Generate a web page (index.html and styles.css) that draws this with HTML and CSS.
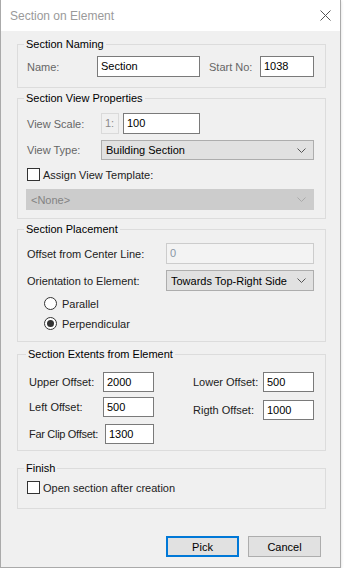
FILE: index.html
```html
<!DOCTYPE html>
<html lang="en">
<head>
    <meta charset="UTF-8">
    <meta name="viewport" content="width=device-width, initial-scale=1.0">
    <title>Section on Element</title>
    <link rel="stylesheet" href="styles.css">
</head>
<body>
    <div class="window">
        <div class="titlebar">
            <span class="title">Section on Element</span>
            <svg class="close" width="11" height="11" viewBox="0 0 11 11">
                <path d="M0.5 0.5 L10.5 10.5 M10.5 0.5 L0.5 10.5" stroke="#555" stroke-width="1" fill="none"/>
            </svg>
        </div>

        <fieldset class="group" id="naming">
            <legend>Section Naming</legend>
            <div class="row first">
                <label class="lbl dim w-name">Name:</label>
                <div class="field w-section">Section</div>
                <label class="lbl dim w-start">Start No:</label>
                <div class="field w-startno">1038</div>
            </div>
        </fieldset>

        <fieldset class="group" id="viewProps">
            <legend>Section View Properties</legend>
            <div class="row scale-row">
                <label class="lbl dim w-view">View Scale:</label>
                <div class="prefix">1:</div>
                <div class="field w-scale">100</div>
            </div>
            <div class="row type-row">
                <label class="lbl dim w-view">View Type:</label>
                <div class="combo w-type">
                    <span>Building Section</span>
                    <svg class="chev" width="9" height="5" viewBox="0 0 9 5"><polyline points="0.5,0.5 4.5,4.5 8.5,0.5" fill="none" stroke="#555"/></svg>
                </div>
            </div>
            <div class="row check-row">
                <span class="checkbox"></span>
                <span class="check-text">Assign View Template:</span>
            </div>
            <div class="row template-row">
                <div class="combo disabled w-template">
                    <span>&lt;None&gt;</span>
                    <svg class="chev" width="9" height="5" viewBox="0 0 9 5"><polyline points="0.5,0.5 4.5,4.5 8.5,0.5" fill="none" stroke="#aaa"/></svg>
                </div>
            </div>
        </fieldset>

        <fieldset class="group" id="placement">
            <legend>Section Placement</legend>
            <div class="row offset-row">
                <label class="lbl w-place">Offset from Center Line:</label>
                <div class="field readonly w-offset">0</div>
            </div>
            <div class="row orient-row">
                <label class="lbl w-place">Orientation to Element:</label>
                <div class="combo w-offset">
                    <span>Towards Top-Right Side</span>
                    <svg class="chev" width="9" height="5" viewBox="0 0 9 5"><polyline points="0.5,0.5 4.5,4.5 8.5,0.5" fill="none" stroke="#555"/></svg>
                </div>
            </div>
            <div class="row radio-row parallel">
                <span class="radio"></span>
                <span class="radio-text">Parallel</span>
            </div>
            <div class="row radio-row perp">
                <span class="radio checked"></span>
                <span class="radio-text">Perpendicular</span>
            </div>
        </fieldset>

        <fieldset class="group" id="extents">
            <legend>Section Extents from Element</legend>
            <div class="extents">
                <div class="col left-col">
                    <div class="row ext-first">
                        <label class="lbl w-ext">Upper Offset:</label>
                        <div class="field w-num">2000</div>
                    </div>
                    <div class="row ext-left">
                        <label class="lbl w-ext">Left Offset:</label>
                        <div class="field w-num">500</div>
                    </div>
                    <div class="row ext-far">
                        <label class="lbl w-far">Far Clip Offset:</label>
                        <div class="field w-farnum">1300</div>
                    </div>
                </div>
                <div class="col right-col">
                    <div class="row ext-first">
                        <label class="lbl w-ext-r">Lower Offset:</label>
                        <div class="field w-num">500</div>
                    </div>
                    <div class="row ext-right">
                        <label class="lbl w-ext-r">Rigth Offset:</label>
                        <div class="field w-num">1000</div>
                    </div>
                </div>
            </div>
        </fieldset>

        <fieldset class="group" id="finish">
            <legend>Finish</legend>
            <div class="row finish-row">
                <span class="checkbox"></span>
                <span class="check-text">Open section after creation</span>
            </div>
        </fieldset>

        <div class="buttons">
            <button class="btn default">Pick</button>
            <button class="btn">Cancel</button>
        </div>
    </div>
</body>
</html>
```

FILE: styles.css
```css
body {
    margin: 0;
    background: #ffffff;
    font-family: "Liberation Sans", Arial, sans-serif;
    font-size: 11px;
    color: #222;
}

.window {
    box-sizing: border-box;
    width: 341px;
    height: 568px;
    background: #f0f0f0;
    border: 1px solid #aaaaaa;
    border-top: none;
    box-shadow: 0 1px 3px rgba(0, 0, 0, 0.15);
}

.titlebar {
    height: 31px;
    background: #ffffff;
    display: flex;
    align-items: center;
    justify-content: space-between;
    padding: 0 9px 0 9px;
    box-sizing: border-box;
}

.title {
    font-size: 12px;
    color: #9a9a9a;
}

/* group boxes */
.group {
    margin: 0 0 0 16px;
    padding: 0 11px 0 9px;
    width: 309px;
    box-sizing: border-box;
    border: 1px solid #dcdcdc;
    min-width: 0;
}

.group legend {
    margin-left: -3px;
    padding: 0 2px;
    line-height: 14px;
    color: #000;
}

#naming { margin-top: 6px; padding-bottom: 10px; }
#viewProps { margin-top: 3px; padding-bottom: 8px; }
#placement { margin-top: 3px; padding-bottom: 11px; }
#extents { margin-top: 5px; padding-bottom: 6px; padding-left: 11px; }
#finish { margin-top: 10px; padding-bottom: 14px; }

.row {
    display: flex;
    align-items: center;
}

.lbl {
    flex: none;
    color: #222;
}

.lbl.dim {
    color: #666;
}

.field {
    box-sizing: border-box;
    height: 21px;
    line-height: 19px;
    border: 1px solid #7a7a7a;
    background: #ffffff;
    padding: 0 3px;
    color: #000;
    flex: none;
}

.field.readonly {
    border-color: #cccccc;
    background: #f3f3f3;
    color: #8a96a6;
}

.prefix {
    box-sizing: border-box;
    width: 18px;
    height: 21px;
    line-height: 19px;
    border: 1px solid #dadada;
    color: #8a8a8a;
    padding-left: 3px;
    margin-right: 4px;
}

.combo {
    box-sizing: border-box;
    height: 21px;
    border: 1px solid #adadad;
    background: #e1e1e1;
    display: flex;
    align-items: center;
    justify-content: space-between;
    padding: 0 7px 0 4px;
    color: #000;
    flex: none;
}

.combo.disabled {
    background: #cccccc;
    border-color: #cccccc;
    color: #838383;
}

.checkbox {
    box-sizing: border-box;
    width: 13px;
    height: 13px;
    border: 1px solid #333;
    background: #fff;
    flex: none;
}

.check-text {
    margin-left: 3px;
    color: #222;
}

.radio {
    box-sizing: border-box;
    width: 13px;
    height: 13px;
    border: 1px solid #333;
    border-radius: 50%;
    background: #fff;
    flex: none;
    display: flex;
    align-items: center;
    justify-content: center;
}

.radio.checked::after {
    content: "";
    width: 7px;
    height: 7px;
    border-radius: 50%;
    background: #333;
}

.radio-text {
    margin-left: 5px;
}

/* widths */
.w-name { width: 70px; }
.w-section { width: 103px; }
.w-start { width: 51px; margin-left: 9px; }
.w-startno { width: 54px; }
.w-view { width: 74px; }
.w-scale { width: 77px; }
.w-type { width: 213px; height: 20px; }
.w-template { width: 288px; margin-left: -1px; }
.w-place { width: 139px; }
.w-offset { width: 148px; }
.w-ext { width: 74px; }
.w-far { width: 76px; letter-spacing: -0.3px; }
.w-num { width: 51px; height: 20px; line-height: 18px; }
.w-farnum { width: 49px; height: 20px; line-height: 18px; }
.w-ext-r { width: 70px; }

/* vertical rhythm */
.row.first { margin-top: 5px; }
.scale-row { margin-top: 8px; }
.type-row { margin-top: 6px; height: 20px; }
.check-row { margin-top: 8px; height: 13px; }
.template-row { margin-top: 8px; }
.offset-row { margin-top: 7px; }
.orient-row { margin-top: 6px; }
.radio-row { height: 13px; padding-left: 17px; }
.parallel { margin-top: 6px; }
.perp { margin-top: 7px; }
.finish-row { margin-top: 6px; height: 13px; }

.extents {
    display: flex;
}

.left-col { width: 164px; }
.ext-first { margin-top: 11px; }
.ext-left { margin-top: 5px; }
.ext-far { margin-top: 7px; }
.ext-right { margin-top: 8px; }

/* buttons */
.buttons {
    display: flex;
    justify-content: flex-end;
    gap: 9px;
    margin-top: 27px;
    padding-right: 19px;
}

.btn {
    box-sizing: border-box;
    width: 73px;
    height: 21px;
    background: #e1e1e1;
    border: 1px solid #adadad;
    font-family: "Liberation Sans", Arial, sans-serif;
    font-size: 11px;
    color: #000;
    padding: 0;
}

.btn.default {
    border: 2px solid #0078d7;
}
```
